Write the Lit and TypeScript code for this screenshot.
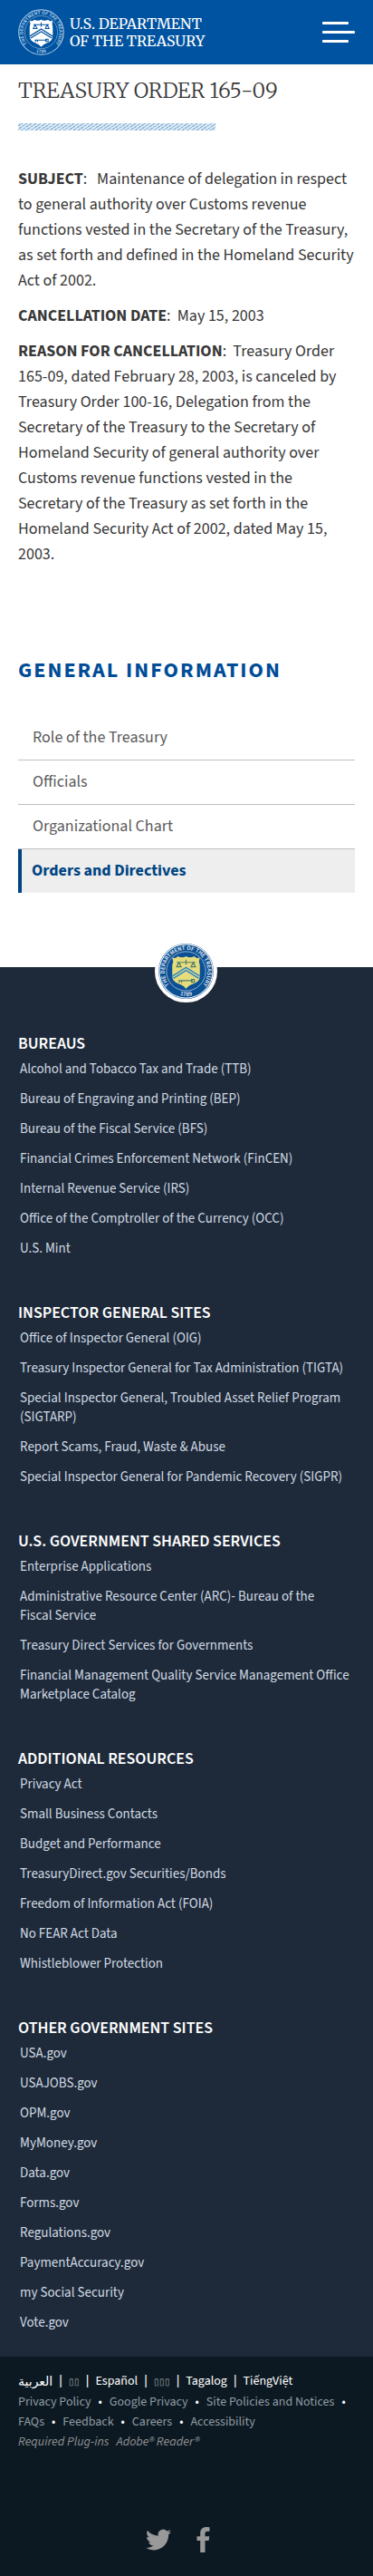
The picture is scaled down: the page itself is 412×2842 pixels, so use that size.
import { LitElement, html, css, svg } from "lit";
import { customElement, property } from "lit/decorators.js";

interface LinkGroup {
  title: string;
  links: string[];
}

const groups: LinkGroup[] = [
  {
    title: "Bureaus",
    links: [
      "Alcohol and Tobacco Tax and Trade (TTB)",
      "Bureau of Engraving and Printing (BEP)",
      "Bureau of the Fiscal Service (BFS)",
      "Financial Crimes Enforcement Network (FinCEN)",
      "Internal Revenue Service (IRS)",
      "Office of the Comptroller of the Currency (OCC)",
      "U.S. Mint",
    ],
  },
  {
    title: "Inspector General Sites",
    links: [
      "Office of Inspector General (OIG)",
      "Treasury Inspector General for Tax Administration (TIGTA)",
      "Special Inspector General, Troubled Asset Relief Program (SIGTARP)",
      "Report Scams, Fraud, Waste & Abuse",
      "Special Inspector General for Pandemic Recovery (SIGPR)",
    ],
  },
  {
    title: "U.S. Government Shared Services",
    links: [
      "Enterprise Applications",
      "Administrative Resource Center (ARC)- Bureau of the Fiscal\u00a0Service",
      "Treasury Direct Services for Governments",
      "Financial Management Quality Service Management Office Marketplace Catalog",
    ],
  },
  {
    title: "Additional Resources",
    links: [
      "Privacy Act",
      "Small Business Contacts",
      "Budget and Performance",
      "TreasuryDirect.gov Securities/Bonds",
      "Freedom of Information Act (FOIA)",
      "No FEAR Act Data",
      "Whistleblower Protection",
    ],
  },
  {
    title: "Other Government Sites",
    links: [
      "USA.gov",
      "USAJOBS.gov",
      "OPM.gov",
      "MyMoney.gov",
      "Data.gov",
      "Forms.gov",
      "Regulations.gov",
      "PaymentAccuracy.gov",
      "my Social Security",
      "Vote.gov",
    ],
  },
];

const sectionLinks = ["Role of the Treasury", "Officials", "Organizational Chart", "Orders and Directives"];

@customElement("treasury-seal")
export class TreasurySeal extends LitElement {
  @property({ type: Boolean, reflect: true }) mono = false;

  static styles = css`
    :host {
      display: block;
      --field: #0b4f94;
      --ring: #e8eef2;
      --shield: #e6dc7c;
      --detail: #4f7d6d;
      --chevron: #2c86c8;
    }
    :host([mono]) {
      --field: #0053a0;
      --ring: #b9d3ea;
      --shield: #ffffff;
      --detail: #0053a0;
      --chevron: #0053a0;
    }
    svg {
      display: block;
      width: 100%;
      height: 100%;
    }
    .field { fill: var(--field); }
    .ring { fill: none; stroke: var(--ring); stroke-width: 2; }
    .inner { fill: none; stroke: var(--ring); stroke-width: 1; }
    .lettering {
      fill: var(--ring);
      font: 600 11px "Source Sans 3", "Noto Sans", sans-serif;
    }
    .shield { fill: var(--shield); }
    .detail { fill: none; stroke: var(--detail); stroke-width: 2; }
    .chevron { fill: none; stroke: var(--chevron); stroke-width: 7; }
    .chevron-edge { fill: none; stroke: var(--shield); stroke-width: 2; }
  `;

  render() {
    return svg`
      <svg viewBox="0 0 100 100" aria-hidden="true">
        <defs>
          <path id="arc" d="M20.3 75.6 A39 39 0 1 1 79.7 75.6" />
          <path id="base" d="M36 92.6 A45 45 0 0 0 64 92.6" />
        </defs>
        <circle class="field" cx="50" cy="50" r="50" />
        <circle class="ring" cx="50" cy="50" r="48.5" />
        <circle class="inner" cx="50" cy="50" r="35.5" />
        <text class="lettering" text-anchor="middle"><textPath href="#arc" startOffset="50%">THE DEPARTMENT OF THE TREASURY</textPath></text>
        <text class="lettering" text-anchor="middle"><textPath href="#base" startOffset="50%">1789</textPath></text>
        <path class="shield" d="M25 25 Q31 28 35 23 Q43 27 50 23 Q57 27 65 23 Q69 28 75 25 Q72 32 75 39 L75 59 Q75 69 63 73 Q54 76 50 82 Q46 76 37 73 Q25 69 25 59 L25 39 Q28 32 25 25 Z" />
        <path class="detail" d="M33 34 H67 M50 29 V38 M37 34 L33 42 H41 Z M63 34 L59 42 H67 Z" />
        <path class="chevron" d="M26 61 L50 46 L74 61" />
        <path class="chevron-edge" d="M26 61 L50 46 L74 61" />
        <path class="detail" d="M36 67 H62 M60 65 h5 v5 h-5 z M38 67 v4 M42 67 v4" />
      </svg>
    `;
  }
}

@customElement("app-root")
export class AppRoot extends LitElement {
  static styles = css`
    :host {
      display: block;
      background: #ffffff;
      color: #383838;
      font: 400 18px/28px "Source Sans 3", "Noto Sans CJK SC", sans-serif;
    }
    h1, h2, h3, p, ul { margin: 0; padding: 0; }
    ul { list-style: none; }
    a { color: inherit; text-decoration: none; }

    .masthead {
      display: flex;
      align-items: center;
      justify-content: space-between;
      height: 71px;
      padding: 0 20px;
      background: #0053a0;
    }
    .brand {
      display: flex;
      align-items: center;
      gap: 6px;
      color: #ffffff;
      font: 400 16px/19px Merriweather, "Liberation Serif", serif;
    }
    .brand treasury-seal { width: 51px; height: 51px; }
    .brand-name span { display: block; }
    .menu {
      display: grid;
      gap: 7px;
      width: 36px;
      padding: 0;
      border: 0;
      background: none;
    }
    .menu span {
      width: 29px;
      height: 3px;
      border-radius: 1px;
      background: #ffffff;
    }
    .menu .long { width: 36px; }

    .content { padding: 13px 20px 82px; }
    h1 {
      font: 300 23px/32px Merriweather, "Liberation Serif", serif;
      text-transform: uppercase;
    }
    .rule {
      width: 218px;
      height: 8px;
      margin: 20px 0 40px;
      background: repeating-linear-gradient(145deg, #d9e8f4 0 2px, #8db5d8 2px 3px);
    }
    .order { display: grid; gap: 11px; }
    .order b { font-weight: 700; }

    .section-nav h2 {
      margin: 100px 0 36px;
      color: #004c97;
      font: 700 24px/28px "Source Sans 3", "Noto Sans CJK SC", sans-serif;
      letter-spacing: 2px;
      text-transform: uppercase;
    }
    .section-nav a {
      display: block;
      padding: 10px 16px;
      border-bottom: 1px solid #bfbfbf;
      color: #5b5b5b;
    }
    .section-nav a.active {
      padding-left: 11px;
      border-bottom: 0;
      border-left: 4px solid #004482;
      background: #eeeeee;
      color: #004482;
      font-weight: 700;
    }

    .sites {
      position: relative;
      display: grid;
      gap: 51px;
      padding: 75px 20px 27px;
      background: #1e2a3a;
    }
    .badge {
      position: absolute;
      top: -30px;
      left: 50%;
      width: 61px;
      height: 61px;
      margin-left: -35px;
      border: 4px solid #ffffff;
      border-radius: 50%;
      background: #ffffff;
    }
    .group { display: grid; gap: 7px; }
    .group h3 {
      color: #ffffff;
      font-size: 18px;
      font-weight: 600;
      line-height: 20px;
      text-transform: uppercase;
    }
    .group ul {
      display: grid;
      gap: 12px;
      padding-left: 2px;
      color: #d0d9e2;
      font-size: 15px;
      line-height: 21px;
    }

    .legal {
      padding: 16px 20px 27px;
      background: #0d1922;
      color: #8f9ba3;
      font-size: 14px;
      line-height: 22px;
    }
    .languages { color: #ffffff; }
    .languages, .policies, .plugins { display: flex; flex-wrap: wrap; }
    .languages li + li::before { content: "|"; margin: 0 7px; font-weight: 600; }
    .languages .arabic { font-family: "DejaVu Sans", sans-serif; }
    .languages .boxes { color: #9aa3a9; font-size: 10px; }
    .policies li:not(:last-child)::after { content: "•"; margin: 0 8px; color: #ffffff; }
    .plugins { gap: 8px; color: #8c8f91; font-style: italic; }
    .social {
      display: flex;
      justify-content: center;
      gap: 22px;
      margin-top: 83px;
      padding-right: 12px;
    }
    .social svg { display: block; width: 28px; height: 28px; fill: #999999; }
  `;

  private policies = [
    "Privacy Policy",
    "Google Privacy",
    "Site Policies and Notices",
    "FAQs",
    "Feedback",
    "Careers",
    "Accessibility",
  ];

  render() {
    return html`
      <header class="masthead">
        <a class="brand" href="#">
          <treasury-seal mono></treasury-seal>
          <span class="brand-name"><span>U.S. DEPARTMENT</span><span>OF THE TREASURY</span></span>
        </a>
        <button class="menu" type="button" aria-label="Menu">
          <span></span><span class="long"></span><span></span>
        </button>
      </header>

      <main class="content">
        <h1>Treasury Order 165-09</h1>
        <div class="rule"></div>
        <article class="order">
          <p><b>SUBJECT</b>: &nbsp; Maintenance of delegation in respect to general authority over Customs revenue functions vested in the Secretary of the Treasury, as set forth and defined in the Homeland Security Act of 2002.</p>
          <p><b>CANCELLATION DATE</b>:&nbsp; May 15, 2003</p>
          <p><b>REASON FOR CANCELLATION</b>:&nbsp; Treasury Order 165-09, dated February 28, 2003, is canceled by Treasury Order 100-16, Delegation from the Secretary of the Treasury to the Secretary of Homeland Security of general authority over Customs revenue functions vested in the Secretary of the Treasury as set forth in the Homeland Security Act of 2002, dated May 15, 2003.</p>
        </article>
        <nav class="section-nav">
          <h2>General Information</h2>
          <ul>
            ${sectionLinks.map(
              (label, i) => html`<li><a href="#" class=${i === sectionLinks.length - 1 ? "active" : ""}>${label}</a></li>`
            )}
          </ul>
        </nav>
      </main>

      <footer>
        <div class="sites">
          <treasury-seal class="badge"></treasury-seal>
          ${groups.map(
            (g) => html`
              <section class="group">
                <h3>${g.title}</h3>
                <ul>${g.links.map((l) => html`<li><a href="#">${l}</a></li>`)}</ul>
              </section>
            `
          )}
        </div>
        <div class="legal">
          <ul class="languages">
            <li><a class="arabic" href="#" lang="ar">العربية</a></li>
            <li><a class="boxes" href="#" aria-label="Chinese">▯▯</a></li>
            <li><a href="#" lang="es">Español</a></li>
            <li><a class="boxes" href="#" aria-label="Korean">▯▯▯</a></li>
            <li><a href="#" lang="tl">Tagalog</a></li>
            <li><a href="#" lang="vi">TiếngViệt</a></li>
          </ul>
          <ul class="policies">
            ${this.policies.map((p) => html`<li><a href="#">${p}</a></li>`)}
          </ul>
          <p class="plugins"><span>Required Plug-ins</span><a href="#">Adobe® Reader®</a></p>
          <div class="social">
            <a href="#" aria-label="Twitter">
              <svg viewBox="0 0 24 24"><path d="M23.95 4.57a10 10 0 0 1-2.82.77 4.96 4.96 0 0 0 2.16-2.72c-.95.55-2 .96-3.13 1.18a4.92 4.92 0 0 0-8.38 4.48C7.69 8.09 4.07 6.13 1.64 3.16a4.92 4.92 0 0 0 1.52 6.57 4.9 4.9 0 0 1-2.23-.61v.06a4.92 4.92 0 0 0 3.95 4.83 5 5 0 0 1-2.21.08 4.94 4.94 0 0 0 4.6 3.42A9.87 9.87 0 0 1 0 19.54a13.99 13.99 0 0 0 7.55 2.21c9.05 0 14-7.5 14-13.98 0-.21 0-.42-.02-.63a9.94 9.94 0 0 0 2.46-2.55z"/></svg>
            </a>
            <a href="#" aria-label="Facebook">
              <svg viewBox="0 0 28 28"><path d="M20.500 0.200 V4.800 H18 C15.900 4.800 15.500 5.800 15.500 7.300 V10.300 H20.300 L19.600 15.100 H15.500 V28 H10.200 V15.100 H6.500 V10.300 H10.200 V6.800 C10.200 2.400 12.900 0 16.900 0 C18.700 0 20 .1 20.500 .2 Z"/></svg>
            </a>
          </div>
        </div>
      </footer>
    `;
  }
}
